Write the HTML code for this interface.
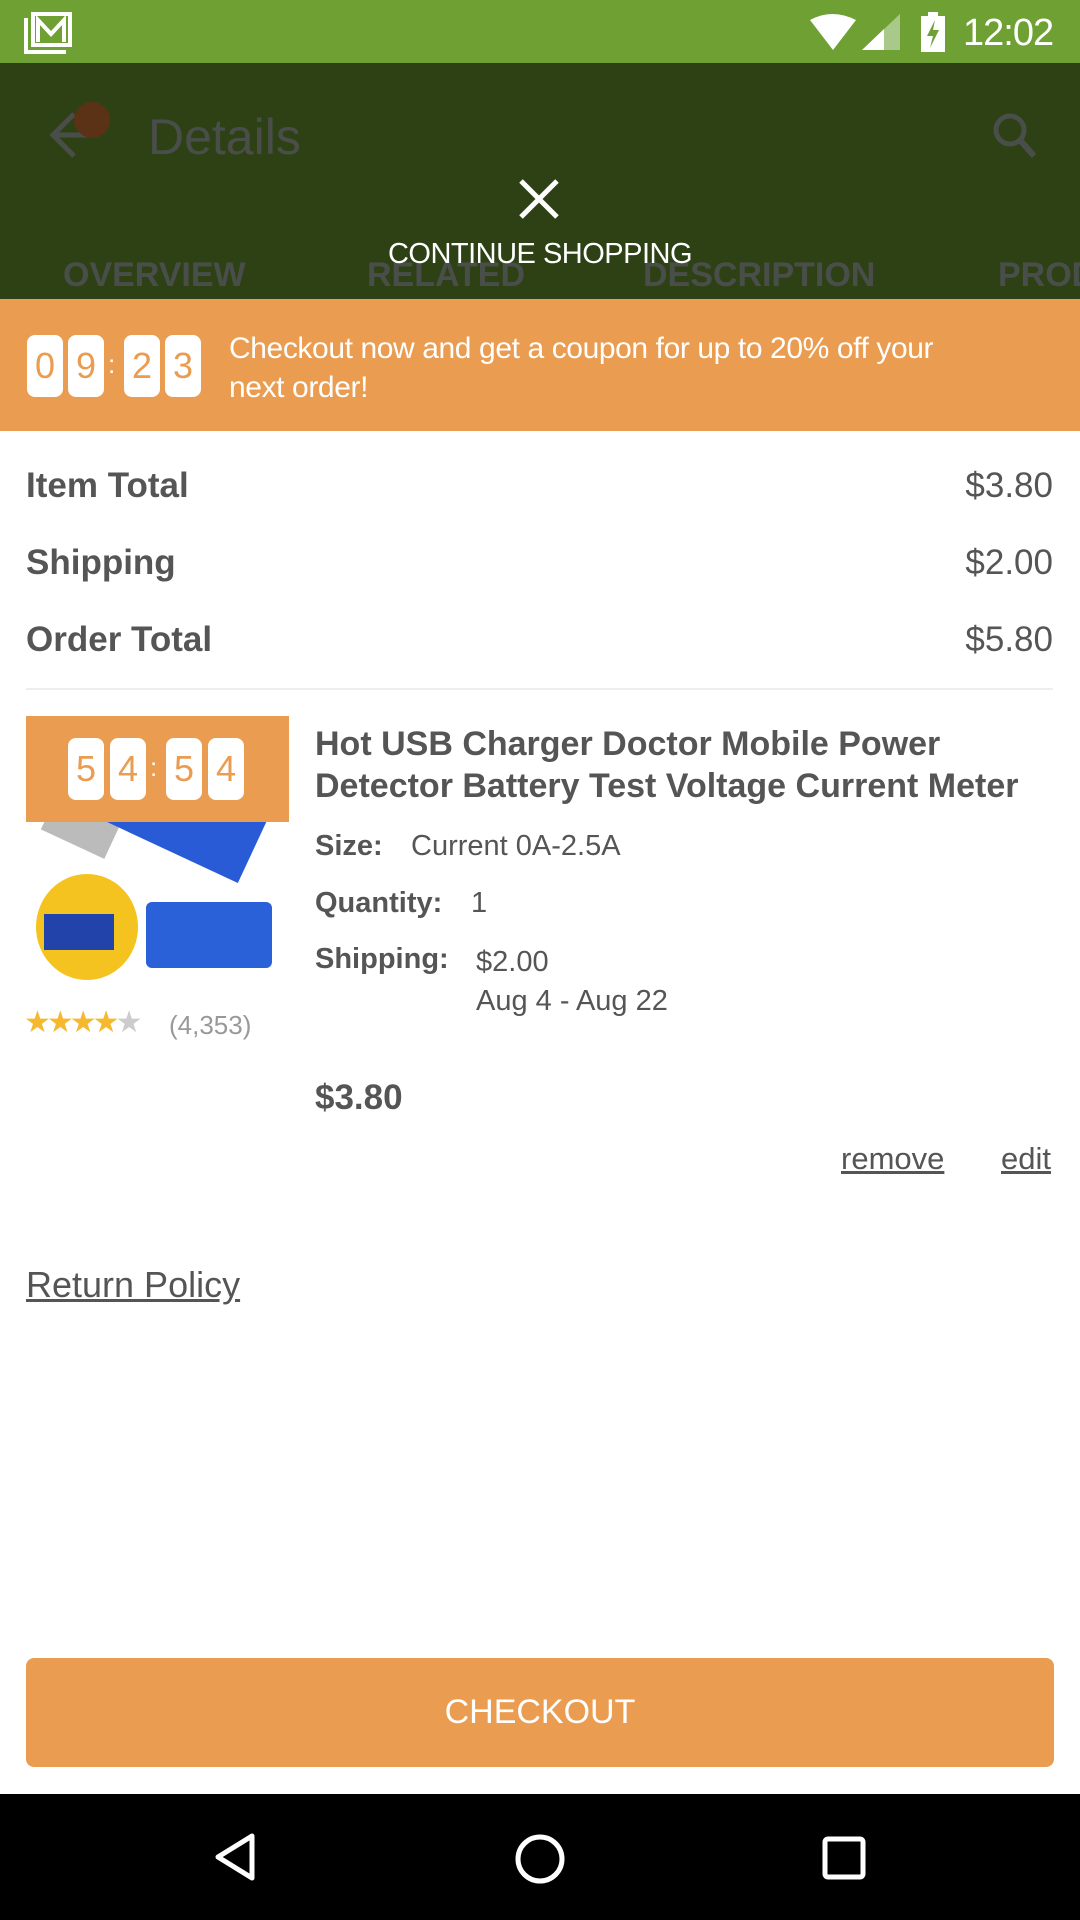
<!DOCTYPE html>
<html><head><meta charset="utf-8"><style>
*{margin:0;padding:0;box-sizing:border-box}
body{width:1080px;height:1920px;position:relative;background:#fff;font-family:"Liberation Sans",sans-serif;color:#555;overflow:hidden}
.abs{position:absolute}
.status{left:0;top:0;width:1080px;height:63px;background:#6fa033}
.dark{left:0;top:63px;width:1080px;height:236px;background:#2e4115}
.banner{left:0;top:299px;width:1080px;height:132px;background:#ea9c51}
.dig{position:absolute;background:#fff;border-radius:8px;color:#ea9c51;font-size:36px;text-align:center;line-height:62px;width:36px;height:62px}
.row{position:absolute;left:26px;right:27px;font-size:35px;display:flex;justify-content:space-between}
.lbl{font-weight:bold}
</style></head><body>
<div class="abs status"></div>
<svg class="abs" style="left:24px;top:12px" width="48" height="42" viewBox="0 0 48 42"><path d="M2 6v34h40" stroke="#fff" stroke-width="4" fill="none"/><rect x="9" y="2" width="37" height="31" fill="none" stroke="#fff" stroke-width="4"/><path d="M14 30V8l13 14 13-14v22" stroke="#fff" stroke-width="4" fill="none"/></svg>
<svg class="abs" style="left:810px;top:14px" width="90" height="38" viewBox="0 0 90 38"><path d="M0 6 Q22 -6 46 6 L23 36Z" fill="#fff"/><path d="M52 36 L90 0 V36Z" fill="#a9c98a"/><path d="M52 36 L74 15 V36Z" fill="#fff"/></svg>
<svg class="abs" style="left:920px;top:12px" width="26" height="40" viewBox="0 0 26 40"><rect x="1" y="4" width="24" height="36" fill="#fff"/><rect x="8" y="0" width="10" height="5" fill="#fff"/><path d="M15 8 L7 24 H13 L10 36 L19 18 H13Z" fill="#6fa033"/></svg>
<div class="abs" style="left:963px;top:12px;font-size:38px;color:#fff;letter-spacing:-1px">12:02</div>
<div class="abs dark"></div>
<svg class="abs" style="left:48px;top:110px" width="52" height="50" viewBox="0 0 52 50"><path d="M4 25h44M26 4 5 25l21 21" stroke="#4a4e4a" stroke-width="5" fill="none"/></svg>
<div class="abs" style="left:74px;top:102px;width:36px;height:36px;border-radius:50%;background:#5c3216"></div>
<div class="abs" style="left:148px;top:108px;font-size:50px;color:#4a4e4a">Details</div>
<svg class="abs" style="left:990px;top:110px" width="52" height="52" viewBox="0 0 52 52"><circle cx="20" cy="20" r="14" stroke="#4a4e4a" stroke-width="5" fill="none"/><path d="M30 30 44 46" stroke="#4a4e4a" stroke-width="6"/></svg>
<svg class="abs" style="left:518px;top:178px" width="42" height="42" viewBox="0 0 42 42"><path d="M3 3 39 39M39 3 3 39" stroke="#fff" stroke-width="5"/></svg>
<div class="abs" style="left:63px;top:256px;font-size:34px;font-weight:bold;color:#4a4e4a;white-space:nowrap">OVERVIEW<span style="position:absolute;left:304px">RELATED</span><span style="position:absolute;left:580px">DESCRIPTION</span><span style="position:absolute;left:935px">PROD</span></div>
<div class="abs" style="left:0;top:238px;width:1080px;text-align:center;font-size:29px;color:#fff;letter-spacing:-0.5px">CONTINUE SHOPPING</div>
<div class="abs banner">
 <div class="dig" style="left:27px;top:36px">0</div>
 <div class="dig" style="left:68px;top:36px">9</div>
 <div style="position:absolute;left:108px;top:50px;color:#fff;font-size:26px">:</div>
 <div class="dig" style="left:124px;top:36px">2</div>
 <div class="dig" style="left:165px;top:36px">3</div>
 <div style="position:absolute;left:229px;top:30px;font-size:30px;color:#fff;line-height:39px;width:760px;letter-spacing:-0.4px">Checkout now and get a coupon for up to 20% off your next order!</div>
</div>
<div class="row" style="top:466px"><span class="lbl">Item Total</span><span>$3.80</span></div>
<div class="row" style="top:543px"><span class="lbl">Shipping</span><span>$2.00</span></div>
<div class="row" style="top:620px"><span class="lbl">Order Total</span><span>$5.80</span></div>
<div class="abs" style="left:26px;top:688px;width:1027px;height:2px;background:#eee"></div>
<div class="abs" style="left:26px;top:716px;width:263px;height:270px;overflow:hidden">
 <div class="abs" style="left:20px;top:90px;width:70px;height:40px;background:#bbb;transform:rotate(25deg)"></div>
 <div class="abs" style="left:90px;top:40px;width:150px;height:100px;background:#2a5bd6;transform:rotate(25deg)"></div>
 <div class="abs" style="left:10px;top:158px;width:102px;height:106px;border-radius:50%;background:#f5c320"></div>
 <div class="abs" style="left:18px;top:198px;width:70px;height:36px;background:#2244aa"></div>
 <div class="abs" style="left:120px;top:186px;width:126px;height:66px;background:#2a60d8;border-radius:6px"></div>
</div>
<div class="abs" style="left:26px;top:716px;width:263px;height:106px;background:#ea9c51">
 <div class="dig" style="left:42px;top:22px">5</div>
 <div class="dig" style="left:84px;top:22px">4</div>
 <div style="position:absolute;left:124px;top:36px;color:#fff;font-size:26px">:</div>
 <div class="dig" style="left:140px;top:22px">5</div>
 <div class="dig" style="left:182px;top:22px">4</div>
</div>
<div class="abs" style="left:24px;top:1005px;font-size:30px;color:#f5b82e;letter-spacing:-4px">★★★★<span style="color:#ccc">★</span></div>
<div class="abs" style="left:169px;top:1010px;font-size:26px;color:#999">(4,353)</div>
<div class="abs" style="left:315px;top:723px;font-size:34px;font-weight:bold;line-height:42px;width:760px">Hot USB Charger Doctor Mobile Power Detector Battery Test Voltage Current Meter</div>
<div class="abs" style="left:315px;top:830px;font-size:29px"><b>Size:</b></div>
<div class="abs" style="left:411px;top:830px;font-size:29px">Current 0A-2.5A</div>
<div class="abs" style="left:315px;top:887px;font-size:29px"><b>Quantity:</b></div>
<div class="abs" style="left:471px;top:887px;font-size:29px">1</div>
<div class="abs" style="left:315px;top:943px;font-size:29px"><b>Shipping:</b></div>
<div class="abs" style="left:476px;top:943px;font-size:29px;line-height:39px">$2.00<br>Aug 4 - Aug 22</div>
<div class="abs" style="left:315px;top:1078px;font-size:35px;font-weight:bold">$3.80</div>
<div class="abs" style="left:841px;top:1141px;font-size:31px;text-decoration:underline">remove</div>
<div class="abs" style="left:1001px;top:1141px;font-size:31px;text-decoration:underline">edit</div>
<div class="abs" style="left:26px;top:1264px;font-size:36px;text-decoration:underline">Return Policy</div>
<div class="abs" style="left:26px;top:1658px;width:1028px;height:109px;background:#ea9c51;border-radius:8px;color:#fff;font-size:34px;text-align:center;line-height:109px">CHECKOUT</div>
<div class="abs" style="left:0;top:1794px;width:1080px;height:126px;background:#000"></div>
<svg class="abs" style="left:210px;top:1832px" width="50" height="50" viewBox="0 0 50 50"><path d="M42 4 8 25l34 21Z" stroke="#fff" stroke-width="5" fill="none" stroke-linejoin="round"/></svg>
<svg class="abs" style="left:513px;top:1832px" width="54" height="54" viewBox="0 0 54 54"><circle cx="27" cy="27" r="22" stroke="#fff" stroke-width="5" fill="none"/></svg>
<svg class="abs" style="left:822px;top:1836px" width="44" height="44" viewBox="0 0 44 44"><rect x="3" y="3" width="38" height="38" rx="3" stroke="#fff" stroke-width="5" fill="none"/></svg>
</body></html>
